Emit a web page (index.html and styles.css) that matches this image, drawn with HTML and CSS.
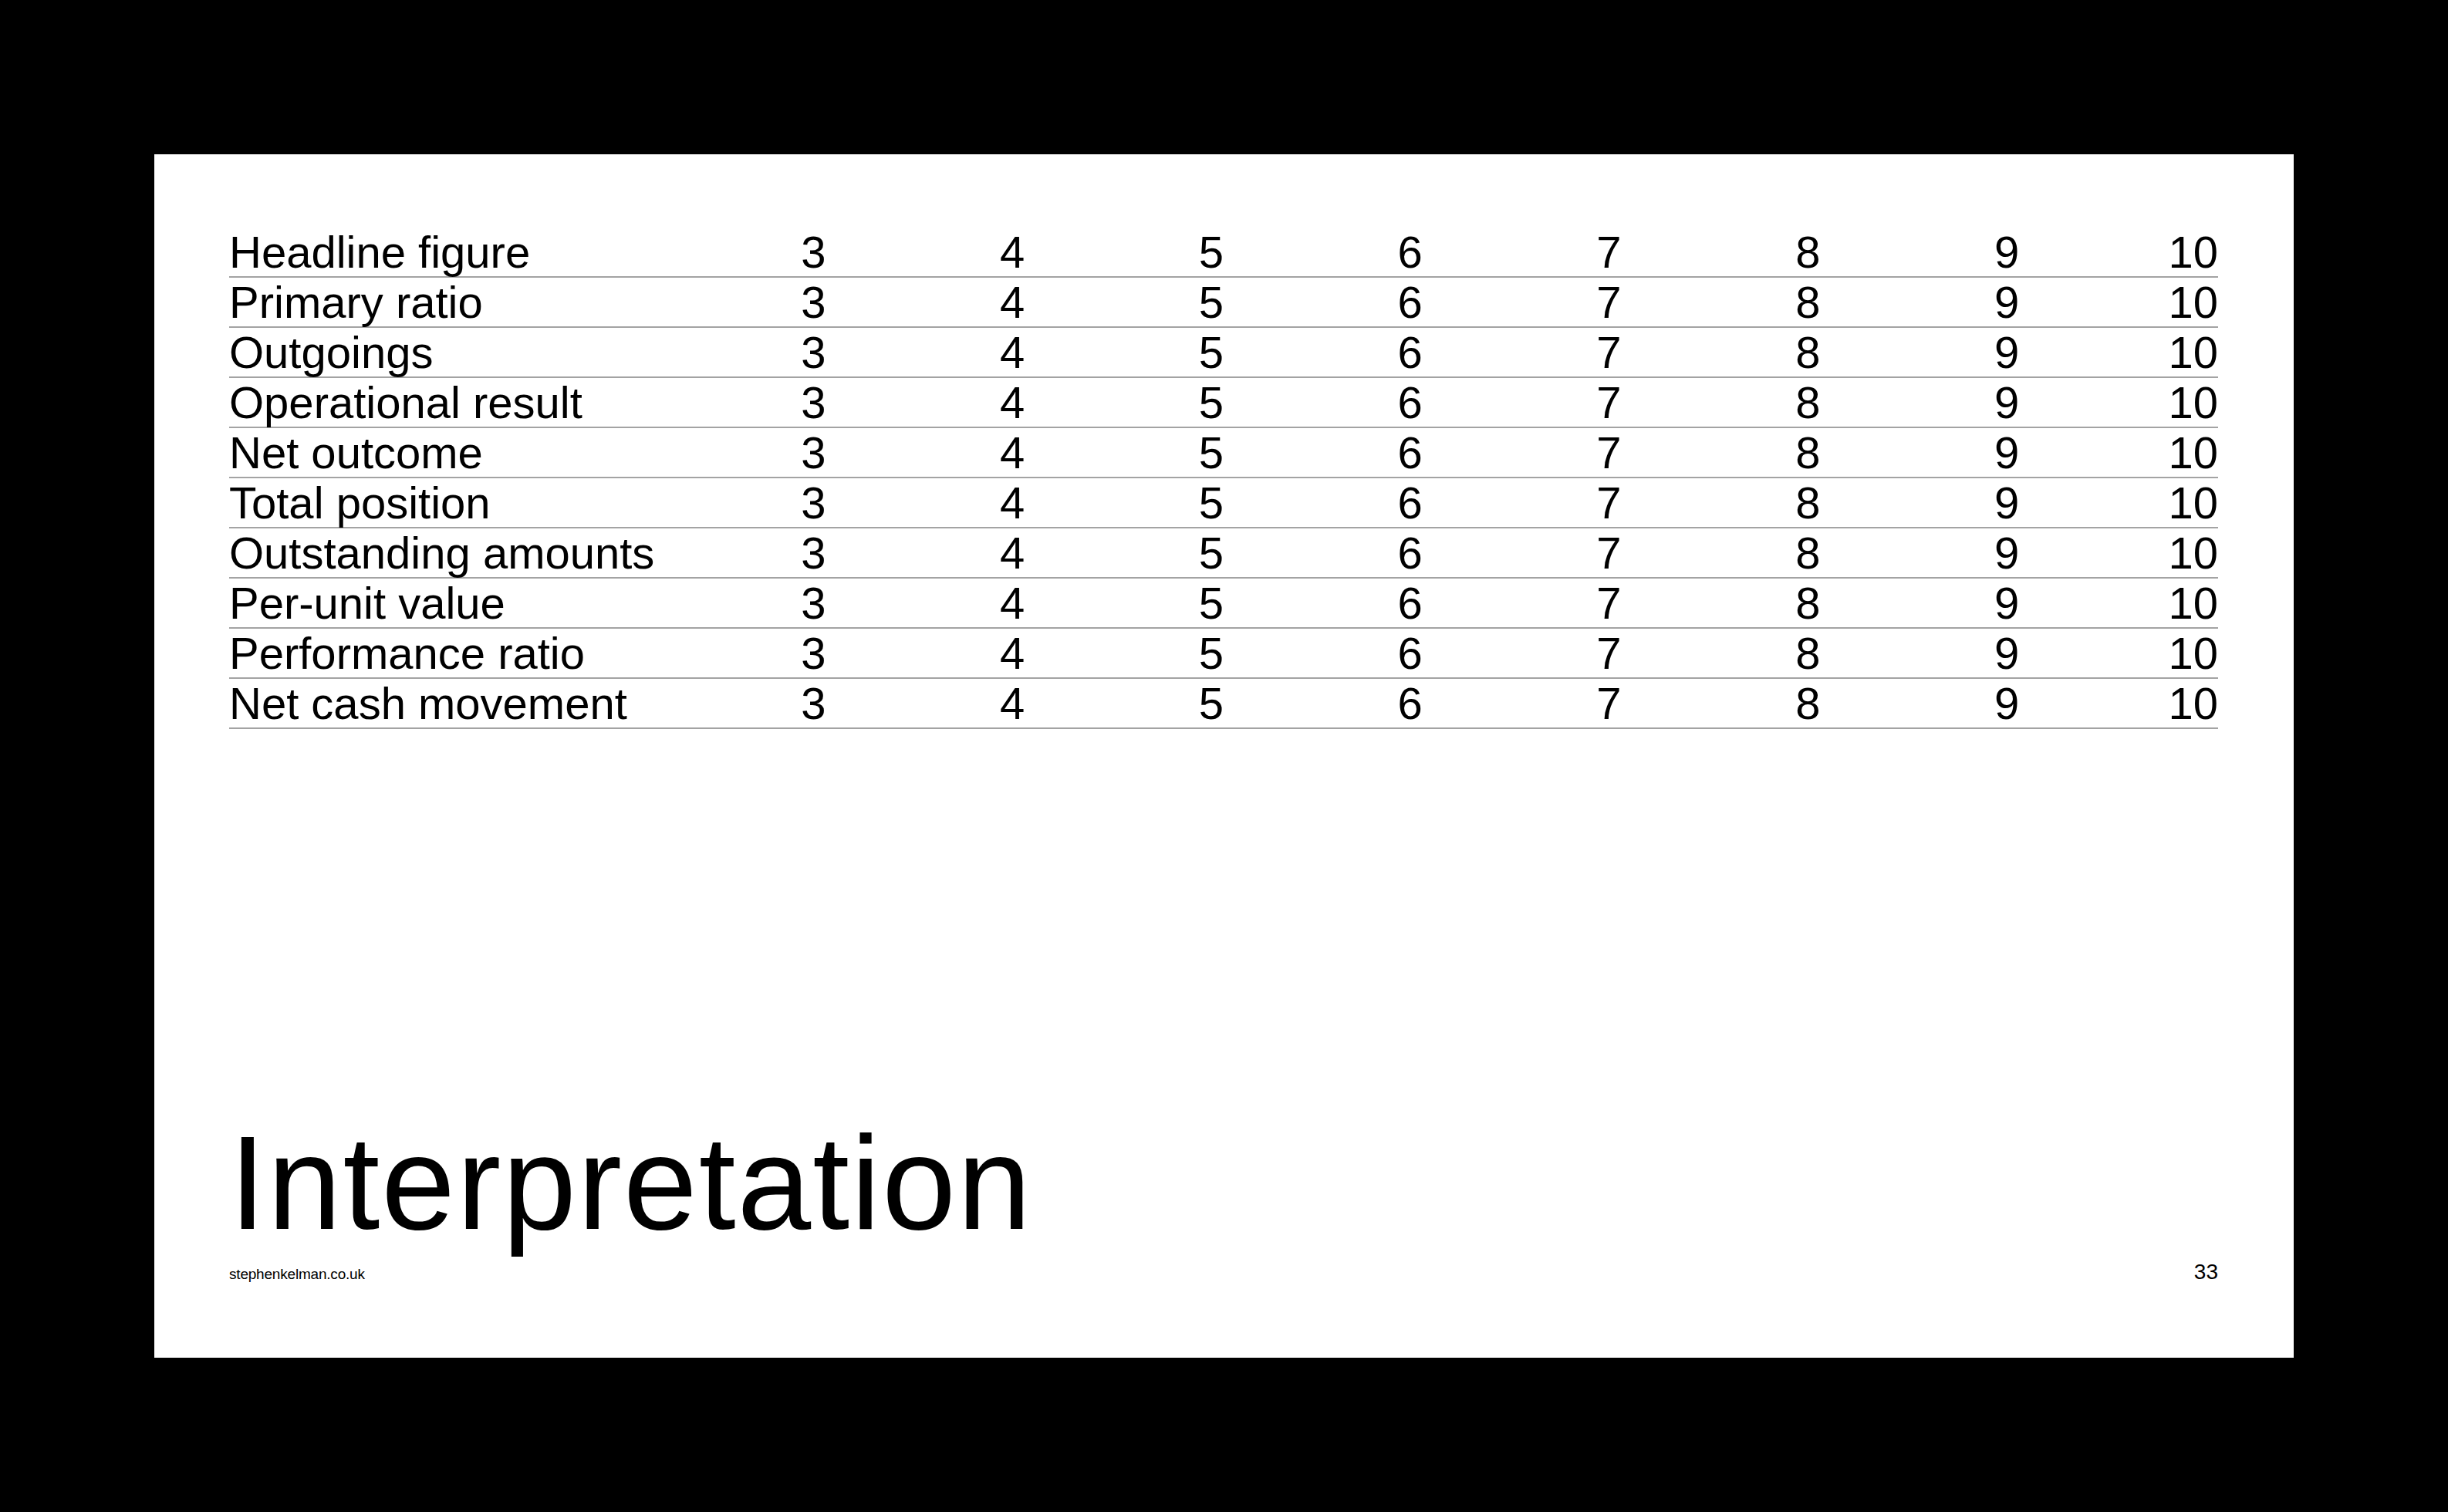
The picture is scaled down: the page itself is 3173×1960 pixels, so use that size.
FILE: index.html
```html
<!DOCTYPE html>
<html lang="en">
<head>
<meta charset="utf-8">
<title>Interpretation</title>
<link rel="stylesheet" href="styles.css">
</head>
<body>
<div class="slide">
  <div class="table">
    <div class="row"><div class="label">Headline figure</div><div class="num">3</div><div class="num">4</div><div class="num">5</div><div class="num">6</div><div class="num">7</div><div class="num">8</div><div class="num">9</div><div class="num">10</div></div>
    <div class="row"><div class="label">Primary ratio</div><div class="num">3</div><div class="num">4</div><div class="num">5</div><div class="num">6</div><div class="num">7</div><div class="num">8</div><div class="num">9</div><div class="num">10</div></div>
    <div class="row"><div class="label">Outgoings</div><div class="num">3</div><div class="num">4</div><div class="num">5</div><div class="num">6</div><div class="num">7</div><div class="num">8</div><div class="num">9</div><div class="num">10</div></div>
    <div class="row"><div class="label">Operational result</div><div class="num">3</div><div class="num">4</div><div class="num">5</div><div class="num">6</div><div class="num">7</div><div class="num">8</div><div class="num">9</div><div class="num">10</div></div>
    <div class="row"><div class="label">Net outcome</div><div class="num">3</div><div class="num">4</div><div class="num">5</div><div class="num">6</div><div class="num">7</div><div class="num">8</div><div class="num">9</div><div class="num">10</div></div>
    <div class="row"><div class="label">Total position</div><div class="num">3</div><div class="num">4</div><div class="num">5</div><div class="num">6</div><div class="num">7</div><div class="num">8</div><div class="num">9</div><div class="num">10</div></div>
    <div class="row"><div class="label">Outstanding amounts</div><div class="num">3</div><div class="num">4</div><div class="num">5</div><div class="num">6</div><div class="num">7</div><div class="num">8</div><div class="num">9</div><div class="num">10</div></div>
    <div class="row"><div class="label">Per-unit value</div><div class="num">3</div><div class="num">4</div><div class="num">5</div><div class="num">6</div><div class="num">7</div><div class="num">8</div><div class="num">9</div><div class="num">10</div></div>
    <div class="row"><div class="label">Performance ratio</div><div class="num">3</div><div class="num">4</div><div class="num">5</div><div class="num">6</div><div class="num">7</div><div class="num">8</div><div class="num">9</div><div class="num">10</div></div>
    <div class="row"><div class="label">Net cash movement</div><div class="num">3</div><div class="num">4</div><div class="num">5</div><div class="num">6</div><div class="num">7</div><div class="num">8</div><div class="num">9</div><div class="num">10</div></div>
  </div>
  <div class="spacer"></div>
  <h1 class="title">Interpretation</h1>
  <div class="footer">
    <span class="url">stephenkelman.co.uk</span>
    <span class="page">33</span>
  </div>
</div>
</body>
</html>
```

FILE: styles.css
```css
html, body {
  margin: 0;
  padding: 0;
  background: #000;
}

body {
  font-family: "Liberation Sans", Arial, Helvetica, sans-serif;
  color: #000;
  padding: 200px;
  box-sizing: border-box;
  width: 3173px;
  height: 1960px;
}

.slide {
  background: #fff;
  height: 1560px;
  box-sizing: border-box;
  padding: 95px 98px 97px 97px;
  display: flex;
  flex-direction: column;
}

.table {
  display: flex;
  flex-direction: column;
}

.row {
  display: grid;
  grid-template-columns: minmax(0, 2fr) repeat(8, minmax(0, 1fr));
  font-size: 58px;
  line-height: 63px;
  border-bottom: 2px solid #a3a3a3;
}

.label {
  white-space: nowrap;
}

.num {
  text-align: right;
}

.spacer {
  flex: 1;
}

.title {
  margin: 0 0 16px 0;
  font-size: 172px;
  font-weight: 400;
  line-height: 172px;
  letter-spacing: 2px;
}

.footer {
  display: flex;
  justify-content: space-between;
  align-items: baseline;
  line-height: 1;
}

.url {
  font-size: 19px;
  letter-spacing: -0.2px;
}

.page {
  font-size: 28px;
}
```
